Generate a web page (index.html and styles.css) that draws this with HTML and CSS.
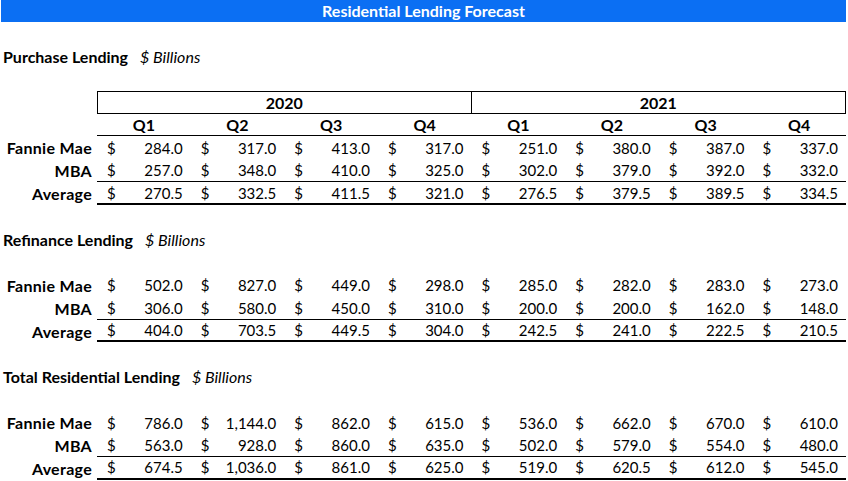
FILE: index.html
```html
<!DOCTYPE html>
<html>
<head>
<meta charset="utf-8">
<link rel="stylesheet" href="styles.css">
</head>
<body>
<div class="sheet">
  <div class="title">Residential Lending Forecast</div>
  <div class="row"></div>
  <div class="row section"><span class="sec-name">Purchase Lending</span><span class="unit">$ Billions</span></div>
  <div class="row"></div>
  <div class="row years"><div></div><div class="year y1">2020</div><div class="year y2">2021</div></div>
  <div class="row grid qs">
    <div></div>
    <div class="q">Q1</div><div class="q">Q2</div><div class="q">Q3</div><div class="q">Q4</div>
    <div class="q">Q1</div><div class="q">Q2</div><div class="q">Q3</div><div class="q">Q4</div>
  </div>
  <div class="row grid">
    <div class="label">Fannie Mae</div>
    <div class="cell"><span>$</span><span>284.0</span></div>
    <div class="cell"><span>$</span><span>317.0</span></div>
    <div class="cell"><span>$</span><span>413.0</span></div>
    <div class="cell"><span>$</span><span>317.0</span></div>
    <div class="cell"><span>$</span><span>251.0</span></div>
    <div class="cell"><span>$</span><span>380.0</span></div>
    <div class="cell"><span>$</span><span>387.0</span></div>
    <div class="cell"><span>$</span><span>337.0</span></div>
  </div>
  <div class="row grid mba">
    <div class="label">MBA</div>
    <div class="cell"><span>$</span><span>257.0</span></div>
    <div class="cell"><span>$</span><span>348.0</span></div>
    <div class="cell"><span>$</span><span>410.0</span></div>
    <div class="cell"><span>$</span><span>325.0</span></div>
    <div class="cell"><span>$</span><span>302.0</span></div>
    <div class="cell"><span>$</span><span>379.0</span></div>
    <div class="cell"><span>$</span><span>392.0</span></div>
    <div class="cell"><span>$</span><span>332.0</span></div>
  </div>
  <div class="row grid avg">
    <div class="label">Average</div>
    <div class="cell"><span>$</span><span>270.5</span></div>
    <div class="cell"><span>$</span><span>332.5</span></div>
    <div class="cell"><span>$</span><span>411.5</span></div>
    <div class="cell"><span>$</span><span>321.0</span></div>
    <div class="cell"><span>$</span><span>276.5</span></div>
    <div class="cell"><span>$</span><span>379.5</span></div>
    <div class="cell"><span>$</span><span>389.5</span></div>
    <div class="cell"><span>$</span><span>334.5</span></div>
  </div>
  <div class="row"></div>
  <div class="row section"><span class="sec-name">Refinance Lending</span><span class="unit">$ Billions</span></div>
  <div class="row"></div>
  <div class="row grid">
    <div class="label">Fannie Mae</div>
    <div class="cell"><span>$</span><span>502.0</span></div>
    <div class="cell"><span>$</span><span>827.0</span></div>
    <div class="cell"><span>$</span><span>449.0</span></div>
    <div class="cell"><span>$</span><span>298.0</span></div>
    <div class="cell"><span>$</span><span>285.0</span></div>
    <div class="cell"><span>$</span><span>282.0</span></div>
    <div class="cell"><span>$</span><span>283.0</span></div>
    <div class="cell"><span>$</span><span>273.0</span></div>
  </div>
  <div class="row grid mba">
    <div class="label">MBA</div>
    <div class="cell"><span>$</span><span>306.0</span></div>
    <div class="cell"><span>$</span><span>580.0</span></div>
    <div class="cell"><span>$</span><span>450.0</span></div>
    <div class="cell"><span>$</span><span>310.0</span></div>
    <div class="cell"><span>$</span><span>200.0</span></div>
    <div class="cell"><span>$</span><span>200.0</span></div>
    <div class="cell"><span>$</span><span>162.0</span></div>
    <div class="cell"><span>$</span><span>148.0</span></div>
  </div>
  <div class="row grid avg">
    <div class="label">Average</div>
    <div class="cell"><span>$</span><span>404.0</span></div>
    <div class="cell"><span>$</span><span>703.5</span></div>
    <div class="cell"><span>$</span><span>449.5</span></div>
    <div class="cell"><span>$</span><span>304.0</span></div>
    <div class="cell"><span>$</span><span>242.5</span></div>
    <div class="cell"><span>$</span><span>241.0</span></div>
    <div class="cell"><span>$</span><span>222.5</span></div>
    <div class="cell"><span>$</span><span>210.5</span></div>
  </div>
  <div class="row"></div>
  <div class="row section"><span class="sec-name">Total Residential Lending</span><span class="unit">$ Billions</span></div>
  <div class="row"></div>
  <div class="row grid">
    <div class="label">Fannie Mae</div>
    <div class="cell"><span>$</span><span>786.0</span></div>
    <div class="cell"><span>$</span><span>1,144.0</span></div>
    <div class="cell"><span>$</span><span>862.0</span></div>
    <div class="cell"><span>$</span><span>615.0</span></div>
    <div class="cell"><span>$</span><span>536.0</span></div>
    <div class="cell"><span>$</span><span>662.0</span></div>
    <div class="cell"><span>$</span><span>670.0</span></div>
    <div class="cell"><span>$</span><span>610.0</span></div>
  </div>
  <div class="row grid mba">
    <div class="label">MBA</div>
    <div class="cell"><span>$</span><span>563.0</span></div>
    <div class="cell"><span>$</span><span>928.0</span></div>
    <div class="cell"><span>$</span><span>860.0</span></div>
    <div class="cell"><span>$</span><span>635.0</span></div>
    <div class="cell"><span>$</span><span>502.0</span></div>
    <div class="cell"><span>$</span><span>579.0</span></div>
    <div class="cell"><span>$</span><span>554.0</span></div>
    <div class="cell"><span>$</span><span>480.0</span></div>
  </div>
  <div class="row grid avg">
    <div class="label">Average</div>
    <div class="cell"><span>$</span><span>674.5</span></div>
    <div class="cell"><span>$</span><span>1,036.0</span></div>
    <div class="cell"><span>$</span><span>861.0</span></div>
    <div class="cell"><span>$</span><span>625.0</span></div>
    <div class="cell"><span>$</span><span>519.0</span></div>
    <div class="cell"><span>$</span><span>620.5</span></div>
    <div class="cell"><span>$</span><span>612.0</span></div>
    <div class="cell"><span>$</span><span>545.0</span></div>
  </div>
</div>
</body>
</html>
```
FILE: styles.css
```css
html, body {
  margin: 0;
  padding: 0;
  background: #fff;
}
body {
  font-family: Lato, "Open Sans", sans-serif;
  font-size: 15px;
  color: #000;
}
.sheet {
  width: 846px;
}
.title {
  height: 22px;
  margin-left: 1px;
  background: #0b6ff3;
  color: #fff;
  font-size: 16px;
  font-weight: 700;
  text-align: center;
  line-height: 22px;
}
.row {
  height: 22.9px;
  box-sizing: border-box;
}
.section {
  display: flex;
  align-items: center;
  gap: 12px;
  padding-left: 3px;
  font-size: 16px;
}
.sec-name {
  font-weight: 700;
}
.unit {
  font-style: italic;
}
.years {
  display: grid;
  grid-template-columns: 97px 1fr 1fr;
}
.year {
  display: flex;
  align-items: center;
  justify-content: center;
  font-size: 16px;
  font-weight: 700;
  border-top: 1px solid #000;
  border-bottom: 1px solid #000;
  border-right: 1px solid #000;
}
.y1 {
  border-left: 1px solid #000;
}
.grid {
  display: grid;
  grid-template-columns: 97px repeat(8, 1fr);
}
.q {
  display: flex;
  align-items: center;
  justify-content: center;
  font-size: 16px;
  font-weight: 700;
  border-bottom: 1px solid #000;
}
.label {
  display: flex;
  align-items: center;
  justify-content: flex-end;
  padding-right: 5px;
  font-size: 16px;
  font-weight: 700;
  letter-spacing: 0.3px;
}
.cell {
  display: flex;
  align-items: center;
  justify-content: space-between;
  padding: 0 8px 0 10px;
  box-sizing: border-box;
}
.mba .cell {
  border-bottom: 1px solid #000;
}
.avg .cell {
  border-bottom: 2px solid #000;
}
```
